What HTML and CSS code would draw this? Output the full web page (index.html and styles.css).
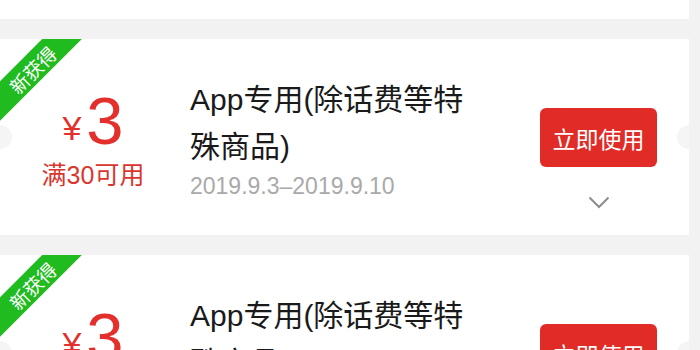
FILE: index.html
```html
<!DOCTYPE html>
<html lang="zh-CN">
<head>
<meta charset="utf-8">
<title>优惠券</title>
<link rel="stylesheet" href="styles.css">
</head>
<body>
<div class="list">
  <div class="card card-tail"></div>

  <div class="card">
    <div class="ribbon"><span>新获得</span></div>
    <i class="notch notch-left"></i>
    <i class="notch notch-right"></i>
    <div class="value">
      <div class="amount"><span class="yen">¥</span><span class="num">3</span></div>
      <div class="cond">满30可用</div>
    </div>
    <div class="info">
      <div class="title">App专用(除话费等特殊商品)</div>
      <div class="date">2019.9.3–2019.9.10</div>
    </div>
    <div class="action">
      <button class="use">立即使用</button>
      <svg class="chev" width="22" height="13" viewBox="0 0 22 13"><polyline points="1.5,1.5 11,11 20.5,1.5" fill="none" stroke="#8c8c8c" stroke-width="2"/></svg>
    </div>
  </div>

  <div class="card">
    <div class="ribbon"><span>新获得</span></div>
    <i class="notch notch-left"></i>
    <i class="notch notch-right"></i>
    <div class="value">
      <div class="amount"><span class="yen">¥</span><span class="num">3</span></div>
      <div class="cond">满30可用</div>
    </div>
    <div class="info">
      <div class="title">App专用(除话费等特殊商品)</div>
      <div class="date">2019.9.3–2019.9.10</div>
    </div>
    <div class="action">
      <button class="use">立即使用</button>
      <svg class="chev" width="22" height="13" viewBox="0 0 22 13"><polyline points="1.5,1.5 11,11 20.5,1.5" fill="none" stroke="#8c8c8c" stroke-width="2"/></svg>
    </div>
  </div>
</div>
</body>
</html>
```

FILE: styles.css
```css
* { box-sizing: border-box; }
html, body {
  margin: 0;
  padding: 0;
  background: #f2f2f2;
  height: 350px;
  overflow: hidden;
  font-family: "Liberation Sans", "Noto Sans CJK SC", sans-serif;
}
.list {
  display: flex;
  flex-direction: column;
  gap: 20px;
  width: 689px;
}
.card {
  position: relative;
  overflow: hidden;
  background: #fff;
  height: 196px;
  flex: none;
  display: flex;
  align-items: stretch;
}
.card-tail { height: 19px; }

.ribbon {
  position: absolute;
  left: -30px;
  top: 16px;
  width: 124px;
  height: 28px;
  background: #1fbb1f;
  transform: rotate(-45deg);
  display: flex;
  align-items: center;
  justify-content: center;
  color: #fff;
  font-size: 19px;
  line-height: 1;
  font-family: "Noto Sans CJK SC", sans-serif;
}
.ribbon span { padding-top: 1px; }

.notch {
  position: absolute;
  top: 86px;
  width: 24px;
  height: 24px;
  border-radius: 50%;
  background: #f5f5f5;
}
.notch-left { left: -12px; }
.notch-right { right: -12px; }

.value {
  width: 186px;
  flex: none;
  display: flex;
  flex-direction: column;
  align-items: center;
  padding-top: 49px;
  color: #e3302c;
}
.amount {
  height: 66px;
  line-height: 66px;
  white-space: nowrap;
}
.yen {
  font-size: 34px;
  margin-right: 5px;
  vertical-align: 4px;
}
.num {
  font-size: 67px;
}
.cond {
  margin-top: 9px;
  font-size: 25px;
  line-height: 25px;
  color: #d9362f;
}

.info {
  width: 292px;
  flex: none;
  margin-left: 4px;
  padding-top: 37px;
}
.title {
  font-size: 30px;
  line-height: 47px;
  color: #1a1a1a;
}
.date {
  margin-top: 2px;
  font-size: 23px;
  line-height: 28px;
  color: #a9a9a9;
}

.action {
  margin-left: auto;
  width: 117px;
  margin-right: 32px;
  flex: none;
  display: flex;
  flex-direction: column;
  align-items: center;
  padding-top: 69px;
}
.use {
  width: 117px;
  height: 59px;
  border: 0;
  border-radius: 6px;
  background: #e12b27;
  color: #fff;
  font-size: 23px;
  font-family: "Noto Sans CJK SC", sans-serif;
  padding: 0;
}
.chev {
  display: block;
  margin-top: 29px;
}
```
